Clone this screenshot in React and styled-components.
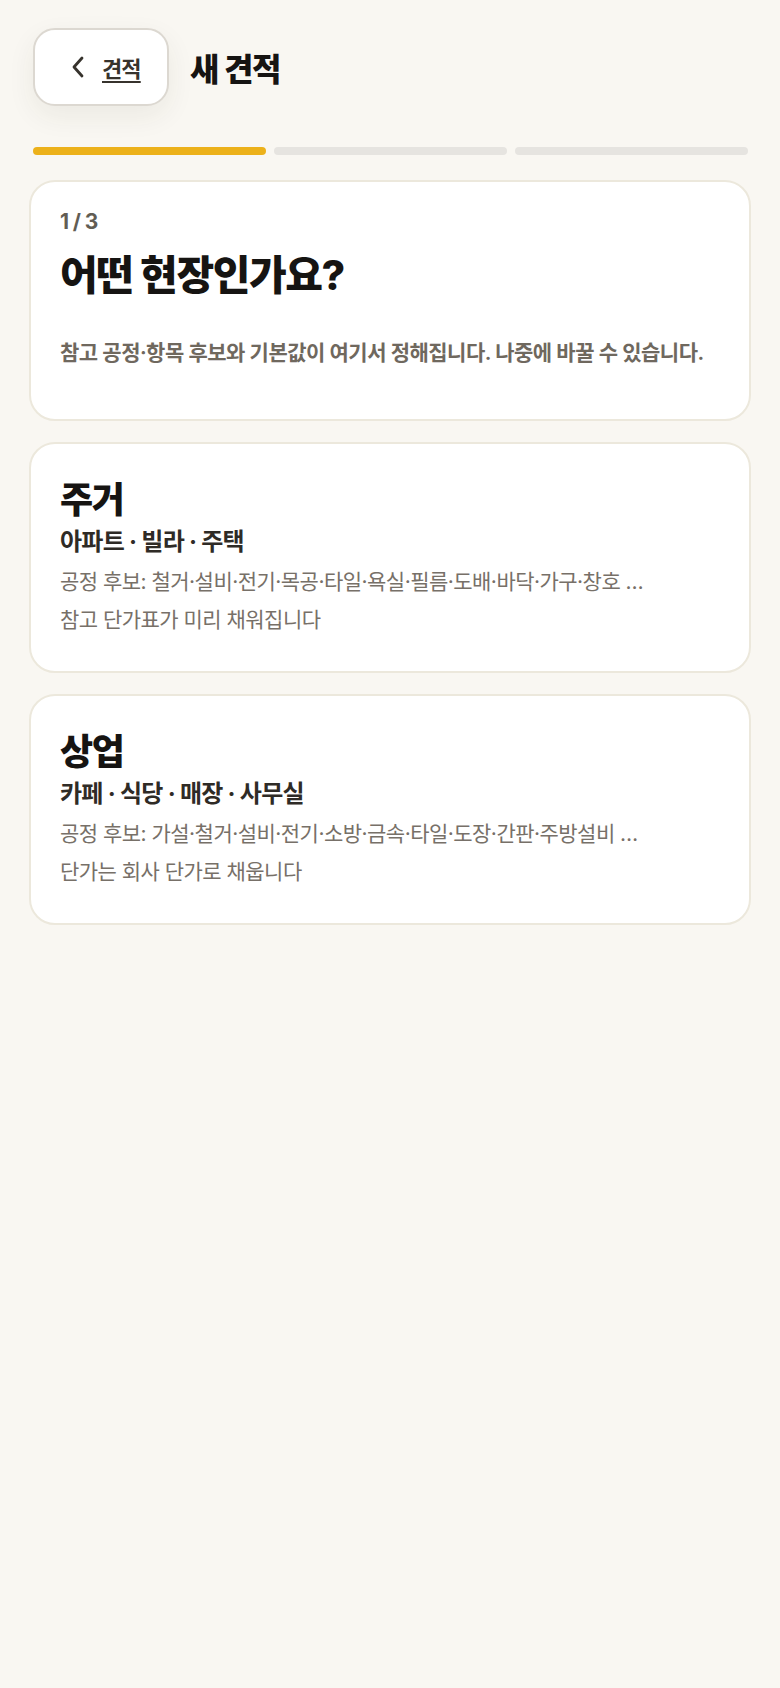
import React from "react";
import styled, { createGlobalStyle } from "styled-components";

const Global = createGlobalStyle`
  html, body { margin: 0; padding: 0; background: #f9f7f2; }
  body { font-family: Inter, "Noto Sans CJK KR", sans-serif; -webkit-font-smoothing: antialiased; }
  * { box-sizing: border-box; }
`;

const Page = styled.div`
  min-height: 1688px;
  background: #f9f7f2;
  padding: 28px 29px 40px;
  display: flex;
  flex-direction: column;
  font-family: Inter, "Noto Sans CJK KR", sans-serif;
`;

const Header = styled.header`
  display: flex;
  align-items: center;
  gap: 21px;
  margin-left: 4px;
`;

const BackButton = styled.button`
  width: 136px;
  height: 78px;
  border: 2px solid #dcd8d1;
  border-radius: 22px;
  background: #ffffff;
  box-shadow: 0 10px 28px rgba(60, 50, 30, 0.07);
  display: flex;
  align-items: center;
  padding: 0 0 0 36px;
  gap: 17px;
  cursor: pointer;
  color: #37332d;
  font-family: inherit;
`;

const BackLabel = styled.span`
  font-size: 22px;
  font-weight: 700;
  letter-spacing: -0.04em;
  text-decoration: underline;
  text-underline-offset: 4px;
  text-decoration-thickness: 2px;
  color: #37332d;
`;

const PageTitle = styled.h1`
  margin: 0;
  font-size: 32px;
  font-weight: 800;
  letter-spacing: -0.04em;
  color: #161412;
`;

const Progress = styled.div`
  display: grid;
  grid-template-columns: repeat(3, 1fr);
  gap: 8px;
  margin: 41px 3px 0 4px;
`;

const Bar = styled.div`
  height: 8px;
  border-radius: 4px;
  background: ${(p) => (p.$active ? "#ecb11a" : "#e6e4e0")};
`;

const Cards = styled.div`
  display: flex;
  flex-direction: column;
  gap: 21px;
  margin-top: 25px;
`;

const Card = styled.div`
  background: #ffffff;
  border: 2px solid #ece8dc;
  border-radius: 26px;
  padding: ${(p) => p.$pad || "34px 29px 32px"};
  display: flex;
  flex-direction: column;
`;

const Step = styled.div`
  font-size: 21px;
  line-height: 28px;
  font-weight: 700;
  color: #625d54;
  letter-spacing: -0.03em;
`;

const Question = styled.h2`
  margin: 15px 0 0;
  font-size: 41px;
  line-height: 48px;
  font-weight: 800;
  letter-spacing: -0.035em;
  color: #161412;
`;

const Description = styled.p`
  margin: 39px 0 0;
  font-size: 21px;
  line-height: 30px;
  font-weight: 600;
  letter-spacing: -0.025em;
  color: #6f685e;
`;

const OptionTitle = styled.div`
  font-size: 36px;
  line-height: 44px;
  font-weight: 800;
  letter-spacing: -0.04em;
  color: #161412;
`;

const OptionSub = styled.div`
  margin-top: 5px;
  font-size: 24px;
  line-height: 30px;
  font-weight: 700;
  letter-spacing: -0.03em;
  color: #2f2b26;
`;

const OptionLines = styled.div`
  margin-top: 6px;
  display: flex;
  flex-direction: column;
`;

const OptionLine = styled.div`
  font-size: 21px;
  line-height: 38px;
  font-weight: 400;
  letter-spacing: -0.025em;
  color: #777068;
`;

const Chevron = () => (
  <svg width="14" height="22" viewBox="0 0 14 22" fill="none">
    <path d="M11 2 L3 11 L11 20" stroke="#37332d" strokeWidth="2.8" strokeLinecap="round" strokeLinejoin="round" />
  </svg>
);

const options = [
  {
    title: "주거",
    sub: "아파트 · 빌라 · 주택",
    lines: ["공정 후보: 철거·설비·전기·목공·타일·욕실·필름·도배·바닥·가구·창호 …", "참고 단가표가 미리 채워집니다"],
  },
  {
    title: "상업",
    sub: "카페 · 식당 · 매장 · 사무실",
    lines: ["공정 후보: 가설·철거·설비·전기·소방·금속·타일·도장·간판·주방설비 …", "단가는 회사 단가로 채웁니다"],
  },
];

export default function App() {
  return (
    <>
      <Global />
      <Page>
        <Header>
          <BackButton>
            <Chevron />
            <BackLabel>견적</BackLabel>
          </BackButton>
          <PageTitle>새 견적</PageTitle>
        </Header>
        <Progress>
          <Bar $active />
          <Bar />
          <Bar />
        </Progress>
        <Cards>
          <Card $pad="26px 29px 51px">
            <Step>1 / 3</Step>
            <Question>어떤 현장인가요?</Question>
            <Description>참고 공정·항목 후보와 기본값이 여기서 정해집니다. 나중에 바꿀 수 있습니다.</Description>
          </Card>
          {options.map((o) => (
            <Card key={o.title}>
              <OptionTitle>{o.title}</OptionTitle>
              <OptionSub>{o.sub}</OptionSub>
              <OptionLines>
                {o.lines.map((l) => (
                  <OptionLine key={l}>{l}</OptionLine>
                ))}
              </OptionLines>
            </Card>
          ))}
        </Cards>
      </Page>
    </>
  );
}
